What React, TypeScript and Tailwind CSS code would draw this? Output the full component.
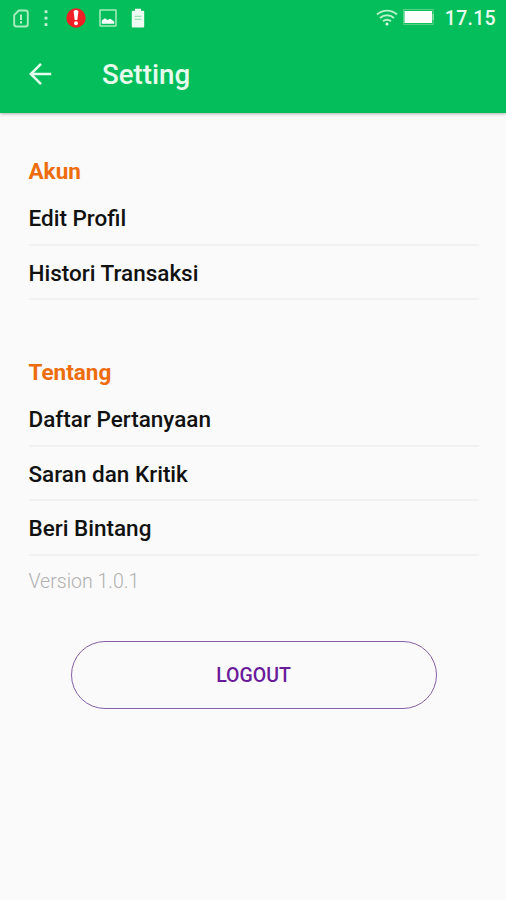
import React from 'react';

interface SettingItemProps {
    label: string;
    className: string;
}

interface SectionTitleProps {
    title: string;
    className: string;
}

const SimIcon = () => (
    <svg width="16" height="19" viewBox="0 0 16 19" fill="none" stroke="#a9edbf" strokeWidth="1.9">
        <path d="M5.8 1.500h6.7c1.5 0 2.3.8 2.3 2.3v11.400c0 1.5-.8 2.3-2.3 2.3h-9C2 17.500 1.2 16.700 1.2 15.200V6.200z" />
        <path d="M8 5.500v5.500M8 12.300v2.200" stroke="#c3f3d2" />
    </svg>
);

const MoreIcon = () => (
    <svg width="4" height="17" viewBox="0 0 4 17" fill="#c3f3d2">
        <rect x=".6" y=".3" width="2.8" height="2.8" />
        <rect x=".6" y="6.700" width="2.8" height="2.8" />
        <rect x=".6" y="13.200" width="2.8" height="2.8" />
    </svg>
);

const AlertIcon = () => (
    <svg width="20" height="20" viewBox="0 0 20 20">
        <circle cx="10" cy="10" r="9.700" fill="#f01f26" />
        <path d="M7.600 3.200Q10 .6 12.400 3.200L11.300 12H8.700z" fill="#fff" />
        <circle cx="10" cy="15.300" r="2" fill="#fff" />
    </svg>
);

const PictureIcon = () => (
    <svg width="18" height="18" viewBox="0 0 18 18">
        <rect x="1" y="1" width="16" height="16" rx=".6" fill="none" stroke="#a9edbf" strokeWidth="1.500" />
        <path d="M2.800 14.800v-3.300l3.100-2.300 2.400 1.900 3-1.400 3.900 2.800v2.300z" fill="#fff" />
    </svg>
);

const BatterySaverIcon = () => (
    <svg width="14" height="20" viewBox="0 0 14 20">
        <path d="M4 .7h6v2h2.300c.5 0 .9.4.9.9v15c0 .5-.4.9-.9.9H1.700c-.5 0-.9-.4-.9-.9v-15c0-.5.4-.9.9-.9H4z" fill="#effcf3" />
        <path d="M3.500 8.400h7M3.500 11.400h7" stroke="#9be2b4" strokeWidth="1.300" />
    </svg>
);

const WifiIcon = () => (
    <svg width="22" height="17" viewBox="0 0 22 17" fill="none" stroke="#b9f1ca" strokeWidth="1.900">
        <path d="M1 5.400c6-5 14-5 20 0" />
        <path d="M4 9c4.200-3.600 9.800-3.600 14 0" />
        <path d="M7 12.300c2.500-2 5.500-2 8 0" />
        <circle cx="11" cy="15" r="1.500" fill="#dff9e7" stroke="none" />
    </svg>
);

const BatteryIcon = () => (
    <svg width="32" height="16" viewBox="0 0 32 16">
        <rect x=".6" y=".6" width="29.500" height="14.800" fill="none" stroke="#5fd287" strokeWidth="1" />
        <rect x="1.500" y="2" width="27.500" height="12" fill="#fff" />
        <rect x="29.500" y="5" width="1.300" height="6" fill="#8fe3ab" />
    </svg>
);

const BackIcon = () => (
    <svg width="24" height="24" viewBox="0 0 24 24" fill="none" stroke="#e6fbed" strokeWidth="2.500">
        <path d="M23.200 12H3M13 1.800L2.800 12l10.200 10.200" />
    </svg>
);

const StatusBar = () => (
    <div className="flex h-[36px] items-center justify-between pr-[10px] pl-[13px] text-[#e6fbed]">
        <div className="flex items-center">
            <SimIcon />
            <div className="ml-[15px]"><MoreIcon /></div>
            <div className="ml-[18px]"><AlertIcon /></div>
            <div className="ml-[13px]"><PictureIcon /></div>
            <div className="ml-[14px]"><BatterySaverIcon /></div>
        </div>
        <div className="flex items-center">
            <div className="-mt-[2px]"><WifiIcon /></div>
            <div className="-mt-[2px] ml-[5px]"><BatteryIcon /></div>
            <span className="ml-[10px] pt-[1px] text-[19.500px] leading-[36px] font-medium tracking-[0.3px]">17.15</span>
        </div>
    </div>
);

const SectionTitle: React.FC<SectionTitleProps> = ({ title, className }) => (
    <h2 className={`text-[22.500px] leading-[26px] font-bold text-[#ed6c0b] ${className}`}>{title}</h2>
);

const SettingItem: React.FC<SettingItemProps> = ({ label, className }) => (
    <li className={`border-b-2 border-[#f1f1f1] text-[22.500px] leading-[26px] font-medium text-[#111] ${className}`}>
        {label}
    </li>
);

const App: React.FC = () => (
    <div className="h-[900px] w-[506px] overflow-hidden bg-[#fafafa] font-['Roboto',sans-serif]">
        <header className="h-[113px] bg-[#04be5b] shadow-[0_1px_3px_rgba(0,0,0,0.3)]">
            <StatusBar />
            <div className="flex h-[76px] items-center pl-[28px]">
                <button aria-label="Back"><BackIcon /></button>
                <h1 className="ml-[50px] pt-[2px] text-[27.700px] leading-[32px] font-medium text-[#e6fbed]">Setting</h1>
            </div>
        </header>

        <main className="pr-[27px] pl-[28.500px]">
            <SectionTitle title="Akun" className="pt-[45px]" />
            <ul>
                <SettingItem label="Edit Profil" className="h-[62px] pt-[21px]" />
                <SettingItem label="Histori Transaksi" className="h-[54px] pt-[14px]" />
            </ul>

            <SectionTitle title="Tentang" className="mt-[59px]" />
            <ul>
                <SettingItem label="Daftar Pertanyaan" className="h-[62px] pt-[21px]" />
                <SettingItem label="Saran dan Kritik" className="h-[54px] pt-[14px]" />
                <SettingItem label="Beri Bintang" className="h-[55px] pt-[14px]" />
            </ul>
            <p className="pt-[14px] text-[19.500px] leading-[24px] font-light text-[#b0b0b0]">Version 1.0.1</p>

            <button className="mt-[47px] ml-[42px] h-[68px] w-[366px] rounded-full border-[1.500px] border-[#865fa5] pt-[2px] text-[19.500px] font-medium text-[#6a1b9a]">
                LOGOUT
            </button>
        </main>
    </div>
);

export default App;
